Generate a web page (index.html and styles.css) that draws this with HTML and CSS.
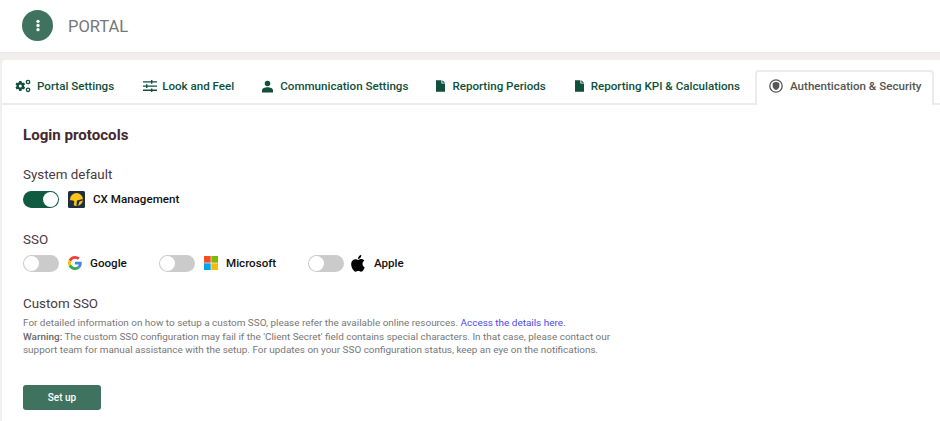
FILE: index.html
```html
<!DOCTYPE html>
<html lang="en">
<head>
<meta charset="utf-8">
<title>Portal</title>
<link rel="stylesheet" href="styles.css">
</head>
<body>
<header class="topbar">
  <div class="avatar">
    <svg viewBox="0 0 8 16" width="6" height="13"><circle cx="4" cy="2.400" r="2.200"/><circle cx="4" cy="8" r="2.200"/><circle cx="4" cy="13.600" r="2.200"/></svg>
  </div>
  <span class="brand">PORTAL</span>
</header>
<main class="stage">
  <section class="card">
    <nav class="tabs">
      <a class="tab tab-portal">
        <svg class="ico" viewBox="0 0 16 14" width="16" height="14"><path d="M5.600 2.600h2.200l.3 1.300 1.100.6 1.200-.4 1.100 1.900-1 .9v1.300l1 .9-1.100 1.900-1.200-.4-1.100.6-.3 1.300H5.600l-.3-1.300-1.100-.6-1.200.4L1.900 9.100l1-.9V6.900l-1-.9L3 4.100l1.200.4 1.100-.6z" transform="translate(-1.400 -.6)"/><circle cx="5.300" cy="6.900" r="1.500" fill="#fff"/><circle cx="13" cy="3" r="1.700" fill="none" stroke="#0f4f3c" stroke-width="1.300"/><circle cx="13" cy="10.800" r="1.700" fill="none" stroke="#0f4f3c" stroke-width="1.300"/></svg>
        Portal Settings
      </a>
      <a class="tab tab-look">
        <svg class="ico" viewBox="0 0 14 12" width="14" height="12"><path d="M0 1.200h8V0h1.400v1.200H14v1.300H9.400v1.200H8V2.500H0zM0 5.400h3V4.200h1.400v1.200H14v1.300H4.400v1.200H3V6.700H0zM0 9.600h8V8.400h1.400v1.200H14v1.300H9.400v1.200H8v-1.200H0z"/></svg>
        Look and Feel
      </a>
      <a class="tab tab-comm">
        <svg class="ico" viewBox="0 0 12 13" width="11" height="13"><circle cx="6" cy="3.200" r="3"/><path d="M0 13v-2.200C0 8.500 3 7.400 6 7.400s6 1.100 6 3.400V13z"/></svg>
        Communication Settings
      </a>
      <a class="tab tab-period">
        <svg class="ico" viewBox="0 0 10 13" width="9" height="12"><path d="M0 0h6v3.600h4V13H0zM7 0l3 2.800H7z"/></svg>
        Reporting Periods
      </a>
      <a class="tab tab-kpi">
        <svg class="ico" viewBox="0 0 10 13" width="9" height="12"><path d="M0 0h6v3.600h4V13H0zM7 0l3 2.800H7z"/></svg>
        Reporting KPI &amp; Calculations
      </a>
      <a class="tab tab-active">
        <svg class="ico" viewBox="0 0 14 14" width="14" height="14"><circle cx="7" cy="7" r="6.200" fill="none" stroke="#555" stroke-width="1.300"/><path d="M7 2.800l3.300 1.100v3c0 2-1.400 3.400-3.300 4.200-1.900-.8-3.300-2.200-3.300-4.200v-3z" fill="#555"/></svg>
        Authentication &amp; Security
      </a>
    </nav>
    <div class="panel">
      <h1 class="title">Login protocols</h1>
      <h2 class="label label-system">System default</h2>
      <div class="row row-system">
        <div class="option">
          <span class="switch on"><span class="knob"></span></span>
          <svg class="logo" viewBox="0 0 17 17" width="17" height="17"><rect width="17" height="17" rx="1.500" fill="#1d2f40"/><circle cx="8.500" cy="8.500" r="6.500" fill="#fcc419"/><path d="M1.800 9.500c1.600-.5 3.100-.3 4.500.7L5.500 15.200 2.500 13zM9 9.500l5.800-1.600v1.700l-3.300 1-1.500 4.400-1.600-.4z" fill="#1d2f40"/></svg>
          <span class="opt-name">CX Management</span>
        </div>
      </div>
      <h2 class="label label-sso">SSO</h2>
      <div class="row row-sso">
        <div class="option opt-google">
          <span class="switch"><span class="knob"></span></span>
          <svg class="logo" viewBox="0 0 48 48" width="14" height="14"><path fill="#EA4335" d="M24 9.500c3.500 0 6.700 1.200 9.200 3.600l6.900-6.900C35.900 2.400 30.500 0 24 0 14.600 0 6.500 5.400 2.600 13.200l8 6.200C12.500 13.700 17.800 9.500 24 9.500z"/><path fill="#4285F4" d="M47 24.500c0-1.600-.1-3.100-.4-4.500H24v9h12.900c-.6 3-2.200 5.500-4.700 7.200l7.700 6C44.400 37.900 47 31.800 47 24.500z"/><path fill="#FBBC05" d="M10.500 28.600c-.5-1.400-.8-3-.8-4.600s.3-3.200.8-4.600l-8-6.200C.9 16.500 0 20.100 0 24s.9 7.500 2.600 10.800z"/><path fill="#34A853" d="M24 48c6.500 0 11.900-2.100 15.900-5.800l-7.700-6c-2.200 1.500-5 2.300-8.200 2.300-6.200 0-11.500-4.200-13.400-9.900l-8 6.200C6.500 42.600 14.600 48 24 48z"/></svg>
          <span class="opt-name">Google</span>
        </div>
        <div class="option opt-ms">
          <span class="switch"><span class="knob"></span></span>
          <svg class="logo" viewBox="0 0 14 14" width="14" height="14"><rect width="6.700" height="6.700" fill="#f25022"/><rect x="7.300" width="6.700" height="6.700" fill="#7fba00"/><rect y="7.300" width="6.700" height="6.700" fill="#00a4ef"/><rect x="7.300" y="7.300" width="6.700" height="6.700" fill="#ffb900"/></svg>
          <span class="opt-name">Microsoft</span>
        </div>
        <div class="option opt-apple">
          <span class="switch"><span class="knob"></span></span>
          <svg class="logo" viewBox="0 0 24 24" width="19" height="19"><path fill="#000" d="M17.050 12.540c-.03-2.650 2.160-3.920 2.260-3.990-1.230-1.800-3.150-2.050-3.830-2.080-1.630-.17-3.180.96-4.010.96-.82 0-2.100-.94-3.460-.91-1.780.03-3.420 1.030-4.340 2.620-1.850 3.210-.47 7.970 1.330 10.580.88 1.270 1.930 2.700 3.310 2.650 1.330-.05 1.830-.86 3.440-.86 1.600 0 2.060.86 3.460.83 1.430-.02 2.340-1.300 3.210-2.580 1.010-1.480 1.430-2.910 1.450-2.990-.03-.01-2.790-1.070-2.820-4.230zM14.420 4.760c.73-.89 1.230-2.120 1.090-3.350-1.050.04-2.330.7-3.090 1.590-.68.78-1.270 2.040-1.110 3.240 1.170.09 2.370-.6 3.110-1.480z"/></svg>
          <span class="opt-name">Apple</span>
        </div>
      </div>
      <h2 class="label label-custom">Custom SSO</h2>
      <p class="help">For detailed information on how to setup a custom SSO, please refer the available online resources. <a class="link">Access the details here.</a><br>
      <strong>Warning:</strong> The custom SSO configuration may fail if the 'Client Secret' field contains special characters. In that case, please contact our support team for manual assistance with the setup. For updates on your SSO configuration status, keep an eye on the notifications.</p>
      <button class="setup" type="button">Set up</button>
    </div>
  </section>
</main>
</body>
</html>
```
FILE: styles.css
```css
* { box-sizing: border-box; }
html, body { margin: 0; padding: 0; }
body {
  width: 940px;
  height: 421px;
  overflow: hidden;
  background: #fff;
  font-family: Roboto, "Liberation Sans", sans-serif;
}
.topbar {
  height: 52px;
  display: flex;
  align-items: center;
  padding-left: 22px;
  padding-bottom: 1px;
  background: #fff;
}
.avatar {
  width: 31px;
  height: 31px;
  border-radius: 50%;
  background: #3f725f;
  display: flex;
  align-items: center;
  justify-content: center;
}
.avatar svg { fill: #fff; }
.brand {
  margin-left: 15px;
  font-size: 16.5px;
  color: #777;
  padding-top: 1px;
}
.stage {
  background: #f1eeee;
  padding: 7px 0 0 2px;
  height: 369px;
  border-top: 1px solid #e8e6e6;
}
.card {
  background: #fff;
  height: 100%;
  border-radius: 4px 0 0 0;
}
.tabs {
  height: 45px;
  display: flex;
  border-bottom: 2px solid #ececec;
}
.tab {
  display: flex;
  align-items: center;
  font-size: 11.6px;
  font-weight: 500;
  color: #0f4f3c;
  white-space: nowrap;
  height: 43px;
  padding-top: 9px;
}
.ico { fill: #0f4f3c; flex: none; }
.tab-portal { margin-left: 13px; }
.tab-portal .ico { margin-right: 6px; }
.tab-look { margin-left: 29px; }
.tab-look .ico { margin-right: 5px; }
.tab-comm { margin-left: 28px; }
.tab-comm .ico { margin-right: 7px; }
.tab-period { margin-left: 28px; }
.tab-period .ico { margin-right: 7px; }
.tab-kpi { margin-left: 29px; }
.tab-kpi .ico { margin-right: 7px; }
.tab-active {
  margin-left: 15px;
  margin-top: 10px;
  height: 35px;
  padding: 0 10px 5px 12px;
  color: #555;
  background: #fff;
  border: 2px solid #ececec;
  border-bottom: 0;
  border-radius: 4px 4px 0 0;
}
.tab-active .ico { margin-right: 7px; }
.panel { padding: 21px 0 0 21px; }
.title {
  margin: 0;
  font-size: 15.1px;
  line-height: 18px;
  font-weight: 700;
  color: #43292f;
}
.label {
  margin: 0;
  font-size: 13.4px;
  line-height: 16px;
  font-weight: 400;
  color: #4b3a3e;
}
.label-system { margin-top: 23px; }
.label-sso { margin-top: 24px; }
.label-custom { margin-top: 24px; }
.row { display: flex; align-items: center; }
.row-system { margin-top: 7px; height: 18px; }
.row-sso { margin-top: 6px; height: 18px; }
.option { display: flex; align-items: center; }
.opt-google { width: 136px; }
.opt-ms { width: 149px; }
.switch {
  width: 36px;
  height: 17px;
  border-radius: 9px;
  background: #cbcbcb;
  position: relative;
  flex: none;
}
.switch.on { background: #0f5a41; }
.knob {
  position: absolute;
  left: 1px;
  top: 1px;
  width: 15px;
  height: 15px;
  border-radius: 50%;
  background: #fff;
}
.on .knob { left: 20px; }
.logo { margin-left: 9px; flex: none; }
.opt-apple .logo { margin-left: 5px; }
.opt-name {
  margin-left: 8px;
  font-size: 11.6px;
  font-weight: 500;
  color: #111;
}
.opt-apple .opt-name { margin-left: 6px; }
.help {
  margin: 4px 0 0;
  width: 600px;
  font-size: 9.93px;
  line-height: 13.5px;
  color: #777;
}
.help strong { font-weight: 500; color: #666; }
.link { color: #4a4ae8; }
.setup {
  display: block;
  margin-top: 28px;
  width: 78px;
  height: 25px;
  border: 0;
  border-radius: 3px;
  background: #3f725f;
  color: #fff;
  font: 500 10px Roboto, "Liberation Sans", sans-serif;
  padding: 0;
}
```
